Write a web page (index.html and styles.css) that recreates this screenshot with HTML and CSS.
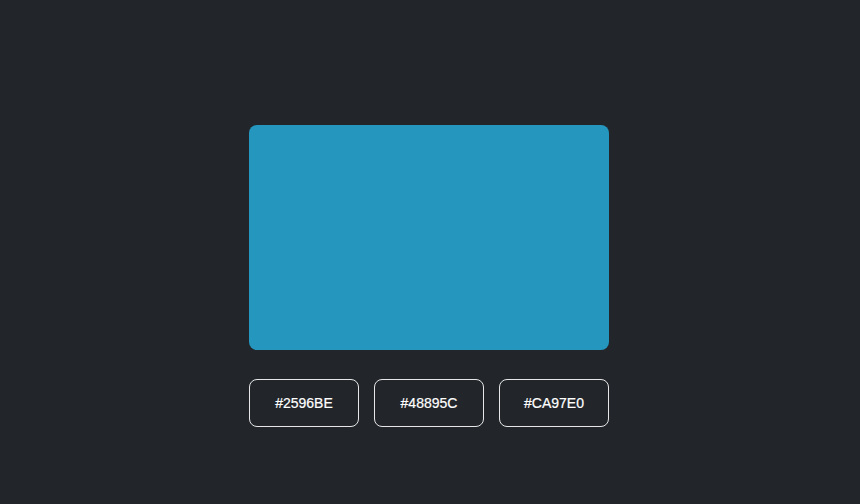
FILE: index.html
```html
<!DOCTYPE html>
<html>
<head>
<meta charset="utf-8">
<link rel="stylesheet" href="styles.css">
</head>
<body>
<main class="app">
  <div class="swatch"></div>
  <div class="choices">
    <button class="choice">#2596BE</button>
    <button class="choice">#48895C</button>
    <button class="choice">#CA97E0</button>
  </div>
</main>
</body>
</html>
```
FILE: styles.css
```css
html, body {
  margin: 0;
  height: 100%;
  background: #22262b;
}
.app {
  display: flex;
  flex-direction: column;
  align-items: center;
  padding-top: 125px;
  padding-right: 2px;
  gap: 29px;
  font-family: "Liberation Sans", Arial, sans-serif;
}
.swatch {
  width: 360px;
  height: 225px;
  border-radius: 8px;
  background: #2596BE;
}
.choices {
  display: flex;
  gap: 15px;
}
.choice {
  width: 110px;
  height: 48px;
  box-sizing: border-box;
  background: transparent;
  border: 1px solid #e6e6e6;
  border-radius: 8px;
  color: #ffffff;
  font-family: "Liberation Sans", Arial, sans-serif;
  font-size: 14px;
  font-weight: 500;
  padding: 0;
  cursor: pointer;
  -webkit-text-stroke: 0.2px #ffffff;
}
```
